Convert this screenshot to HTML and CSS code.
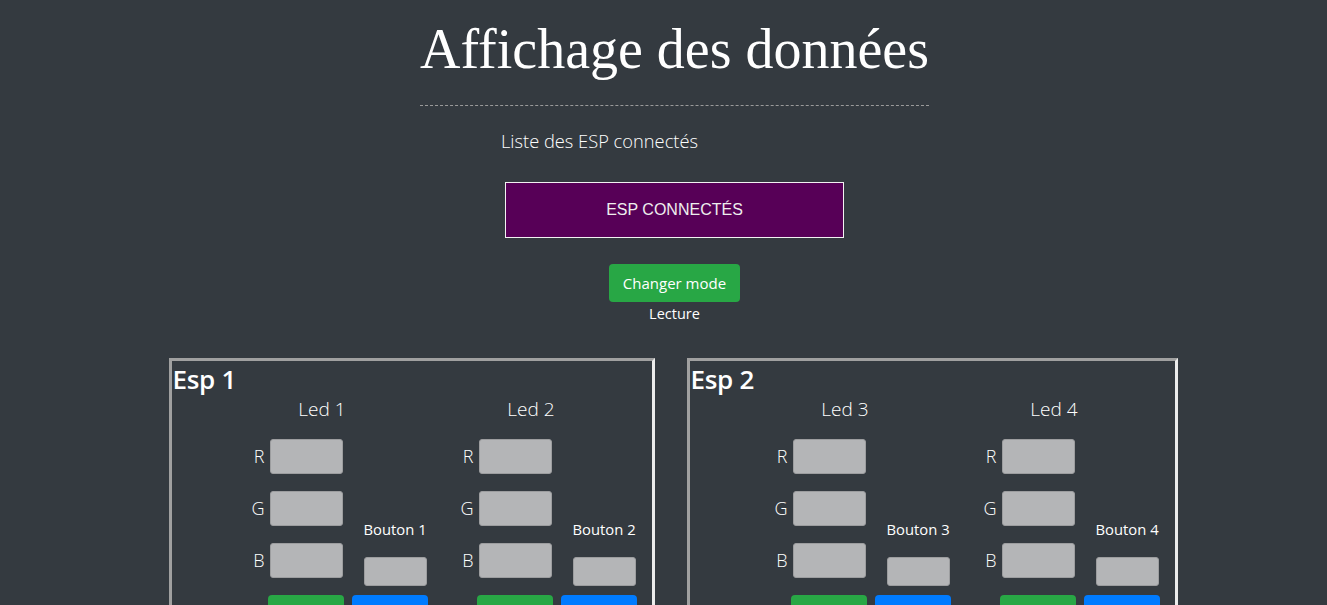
FILE: index.html
```html
<!DOCTYPE html>
<html lang="fr">
<head>
<meta charset="utf-8">
<title>Affichage des données</title>
<link rel="stylesheet" href="styles.css">
</head>
<body>
<div class="page">
  <header class="head">
    <h1 class="title">Affichage des données</h1>
  </header>
  <section class="list">
    <p class="lead">Liste des ESP connectés</p>
    <div class="esp-list">ESP CONNECTÉS</div>
  </section>
  <div class="mode">
    <button class="btn btn-green">Changer mode</button>
    <div class="mode-label">Lecture</div>
  </div>
  <div class="boxes">
    <div class="box box-1">
      <h3 class="box-title">Esp 1</h3>
      <div class="groups">
        <div class="group">
          <div class="led-title">Led 1</div>
          <div class="main">
            <div class="rgb">
              <div class="row"><span class="lbl">R</span><span class="inp"></span></div>
              <div class="row"><span class="lbl">G</span><span class="inp"></span></div>
              <div class="row"><span class="lbl">B</span><span class="inp"></span></div>
            </div>
            <div class="bouton">
              <div class="bouton-lbl">Bouton 1</div>
              <span class="inp-small"></span>
            </div>
          </div>
          <div class="actions"><span class="abtn green"></span><span class="abtn blue"></span></div>
        </div>
        <div class="group">
          <div class="led-title">Led 2</div>
          <div class="main">
            <div class="rgb">
              <div class="row"><span class="lbl">R</span><span class="inp"></span></div>
              <div class="row"><span class="lbl">G</span><span class="inp"></span></div>
              <div class="row"><span class="lbl">B</span><span class="inp"></span></div>
            </div>
            <div class="bouton">
              <div class="bouton-lbl">Bouton 2</div>
              <span class="inp-small"></span>
            </div>
          </div>
          <div class="actions"><span class="abtn green"></span><span class="abtn blue"></span></div>
        </div>
      </div>
    </div>
    <div class="box box-2">
      <h3 class="box-title">Esp 2</h3>
      <div class="groups">
        <div class="group">
          <div class="led-title">Led 3</div>
          <div class="main">
            <div class="rgb">
              <div class="row"><span class="lbl">R</span><span class="inp"></span></div>
              <div class="row"><span class="lbl">G</span><span class="inp"></span></div>
              <div class="row"><span class="lbl">B</span><span class="inp"></span></div>
            </div>
            <div class="bouton">
              <div class="bouton-lbl">Bouton 3</div>
              <span class="inp-small"></span>
            </div>
          </div>
          <div class="actions"><span class="abtn green"></span><span class="abtn blue"></span></div>
        </div>
        <div class="group">
          <div class="led-title">Led 4</div>
          <div class="main">
            <div class="rgb">
              <div class="row"><span class="lbl">R</span><span class="inp"></span></div>
              <div class="row"><span class="lbl">G</span><span class="inp"></span></div>
              <div class="row"><span class="lbl">B</span><span class="inp"></span></div>
            </div>
            <div class="bouton">
              <div class="bouton-lbl">Bouton 4</div>
              <span class="inp-small"></span>
            </div>
          </div>
          <div class="actions"><span class="abtn green"></span><span class="abtn blue"></span></div>
        </div>
      </div>
    </div>
  </div>
</div>
</body>
</html>
```

FILE: styles.css
```css
* { box-sizing: border-box; }
html, body { margin: 0; padding: 0; }
body {
  background: #343a40;
  color: #fff;
  font-family: "Open Sans", "Noto Sans", sans-serif;
  overflow: hidden;
}
.page {
  margin-left: 22px;
}
.head {
  text-align: center;
  padding-top: 16px;
}
.title {
  display: inline-block;
  margin: 0;
  font-family: "Liberation Serif", serif;
  font-weight: normal;
  font-size: 56px;
  line-height: 1.2;
  padding-bottom: 22px;
  border-bottom: 1px dashed #9a9a9a;
}
.list {
  width: 347px;
  margin: 0 auto;
}
.lead {
  margin: 20px 0 0;
  font-size: 18.3px;
  font-weight: 300;
  line-height: 30px;
}
.esp-list {
  margin: 26px 4px 0;
  height: 56px;
  background: #570057;
  border: 1px solid #f2f2f2;
  display: flex;
  align-items: center;
  justify-content: center;
  font-family: "Liberation Sans", Arial, sans-serif;
  font-size: 16px;
  color: #eee;
}
.mode {
  display: flex;
  flex-direction: column;
  align-items: center;
  margin-top: 26px;
}
.btn {
  font-family: inherit;
  border: none;
  border-radius: 4px;
  color: #fff;
  font-size: 15px;
  height: 38px;
  padding: 0 12px;
  width: 131px;
}
.btn-green { background: #28a745; }
.mode-label {
  font-size: 14.5px;
  line-height: 24px;
}
.boxes {
  display: flex;
  justify-content: center;
  gap: 32px;
  margin-top: 32px;
  padding-right: 3px;
}
.box {
  border: 3px solid;
  border-color: #a0a0a0 #ececec #ececec #a0a0a0;
  height: 300px;
  padding-right: 15px;
}
.box-1 { width: 486px; }
.box-2 { width: 491px; }
.box-title {
  margin: 2px 0 0 1px;
  font-size: 26px;
  font-weight: 600;
  line-height: 1.3;
  letter-spacing: -0.3px;
}
.groups {
  display: flex;
  justify-content: flex-end;
  gap: 26px;
  margin-top: -3px;
}
.group {
  display: flex;
  flex-direction: column;
  width: 183px;
}
.led-title {
  text-align: center;
  padding-right: 28px;
  font-size: 19px;
  font-weight: 300;
  line-height: 30px;
}
.main {
  display: flex;
  align-items: flex-end;
  margin-top: 15px;
}
.rgb {
  display: flex;
  flex-direction: column;
  gap: 17px;
  margin-bottom: 8px;
}
.row {
  display: flex;
  align-items: center;
  gap: 5px;
}
.lbl {
  width: 20px;
  text-align: right;
  font-size: 18px;
  font-weight: 300;
}
.inp {
  display: block;
  width: 73px;
  height: 35px;
  background: #b4b5b7;
  border: 1px solid #9c9d9f;
  border-radius: 3px;
}
.bouton {
  margin-left: 21px;
  width: 64px;
  display: flex;
  flex-direction: column;
}
.bouton-lbl {
  font-size: 14.8px;
  line-height: 24px;
  white-space: nowrap;
}
.inp-small {
  display: block;
  margin-top: 16px;
  width: 63px;
  height: 29px;
  background: #b4b5b7;
  border: 1px solid #9c9d9f;
  border-radius: 3px;
}
.actions {
  display: flex;
  justify-content: flex-end;
  gap: 8px;
  margin-top: 9px;
}
.abtn {
  display: block;
  width: 76px;
  height: 38px;
  border-radius: 4px;
}
.abtn.green { background: #28a745; }
.abtn.blue { background: #007bff; }
```
